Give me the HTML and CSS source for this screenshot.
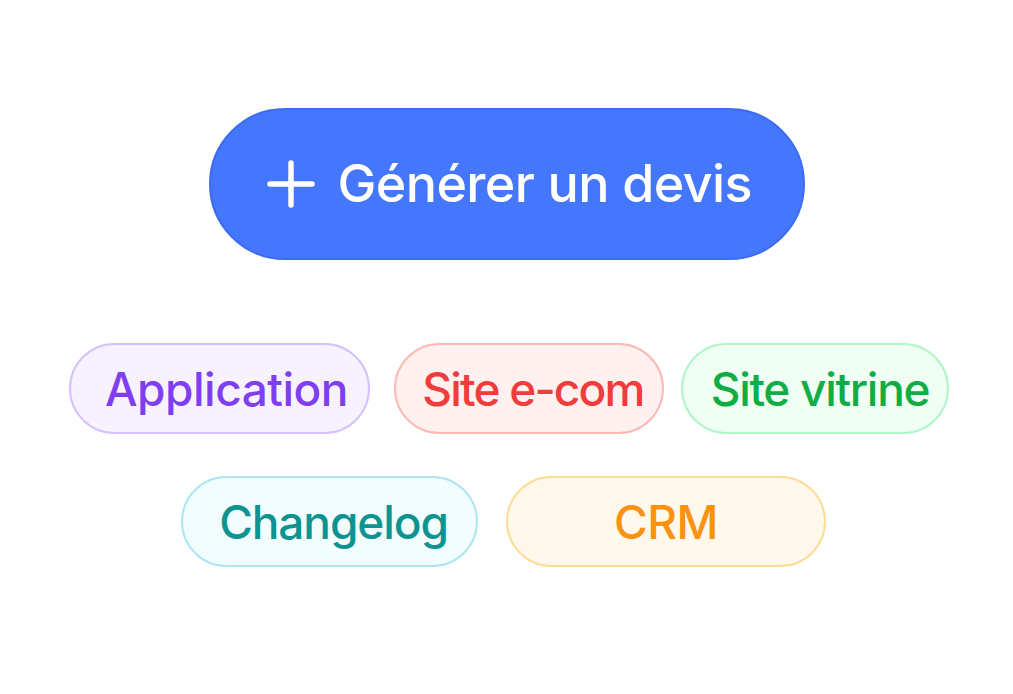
FILE: index.html
```html
<!DOCTYPE html>
<html lang="fr">
<head>
<meta charset="utf-8">
<title>Générer un devis</title>
<link rel="stylesheet" href="styles.css">
</head>
<body>
<main class="stage">
  <button class="cta" type="button">
    <svg class="cta-icon" viewBox="0 0 48 48" width="48" height="48" aria-hidden="true">
      <path d="M24 3v42M3 24h42" stroke="#fff" stroke-width="5.5" stroke-linecap="round" fill="none"/>
    </svg>
    <span class="cta-label">Générer un devis</span>
  </button>
  <div class="tags">
    <div class="tag-row row-1">
      <span class="tag tag-app">Application</span>
      <span class="tag tag-ecom">Site e-com</span>
      <span class="tag tag-vitrine">Site vitrine</span>
    </div>
    <div class="tag-row row-2">
      <span class="tag tag-changelog">Changelog</span>
      <span class="tag tag-crm">CRM</span>
    </div>
  </div>
</main>
</body>
</html>
```
FILE: styles.css
```css
html, body {
  margin: 0;
  padding: 0;
  background: #ffffff;
}
body {
  font-family: Inter, "Noto Sans", "Liberation Sans", sans-serif;
  width: 1013px;
  height: 694px;
  overflow: hidden;
}
.stage {
  display: flex;
  flex-direction: column;
  align-items: center;
  padding-top: 108px;
}
.cta {
  box-sizing: border-box;
  width: 596px;
  height: 152px;
  border-radius: 76px;
  background: #4477fb;
  border: 2px solid #3d6cf2;
  color: #fff;
  display: flex;
  align-items: center;
  gap: 23px;
  padding: 0 0 0 56px;
  font-family: inherit;
  cursor: pointer;
}
.cta-icon {
  flex: none;
  display: block;
}
.cta-label {
  font-size: 52px;
  font-weight: 500;
  letter-spacing: -0.6px;
  line-height: 1;
}
.tags {
  margin-top: 83px;
  display: flex;
  flex-direction: column;
  align-items: center;
  gap: 42px;
}
.tag-row {
  display: flex;
  justify-content: center;
}
.row-1 { padding-left: 5px; }
.row-2 { gap: 28px; padding-right: 6px; }
.tag {
  box-sizing: border-box;
  height: 91px;
  border-radius: 46px;
  border: 2px solid;
  display: flex;
  align-items: center;
  justify-content: center;
  font-size: 46px;
  font-weight: 500;
  letter-spacing: -0.5px;
  line-height: 1;
}
.tag-app {
  width: 301px;
  padding-left: 14px;
  background: #f8f2ff;
  border-color: #d6c1fb;
  color: #7f3ff0;
}
.tag-ecom {
  width: 270px;
  margin: 0 17px 0 24px;
  padding-left: 8px;
  letter-spacing: -1.8px;
  background: #fff1f0;
  border-color: #fbbab6;
  color: #f03c3c;
}
.tag-vitrine {
  width: 268px;
  padding-left: 10px;
  letter-spacing: -1.3px;
  background: #effff3;
  border-color: #b2f5c8;
  color: #10ac44;
}
.tag-changelog {
  width: 297px;
  padding-left: 8px;
  letter-spacing: -1.1px;
  background: #f1fdff;
  border-color: #ade6f2;
  color: #0e9490;
}
.tag-crm {
  width: 320px;
  background: #fff8eb;
  border-color: #fddc98;
  color: #f99111;
}
```
